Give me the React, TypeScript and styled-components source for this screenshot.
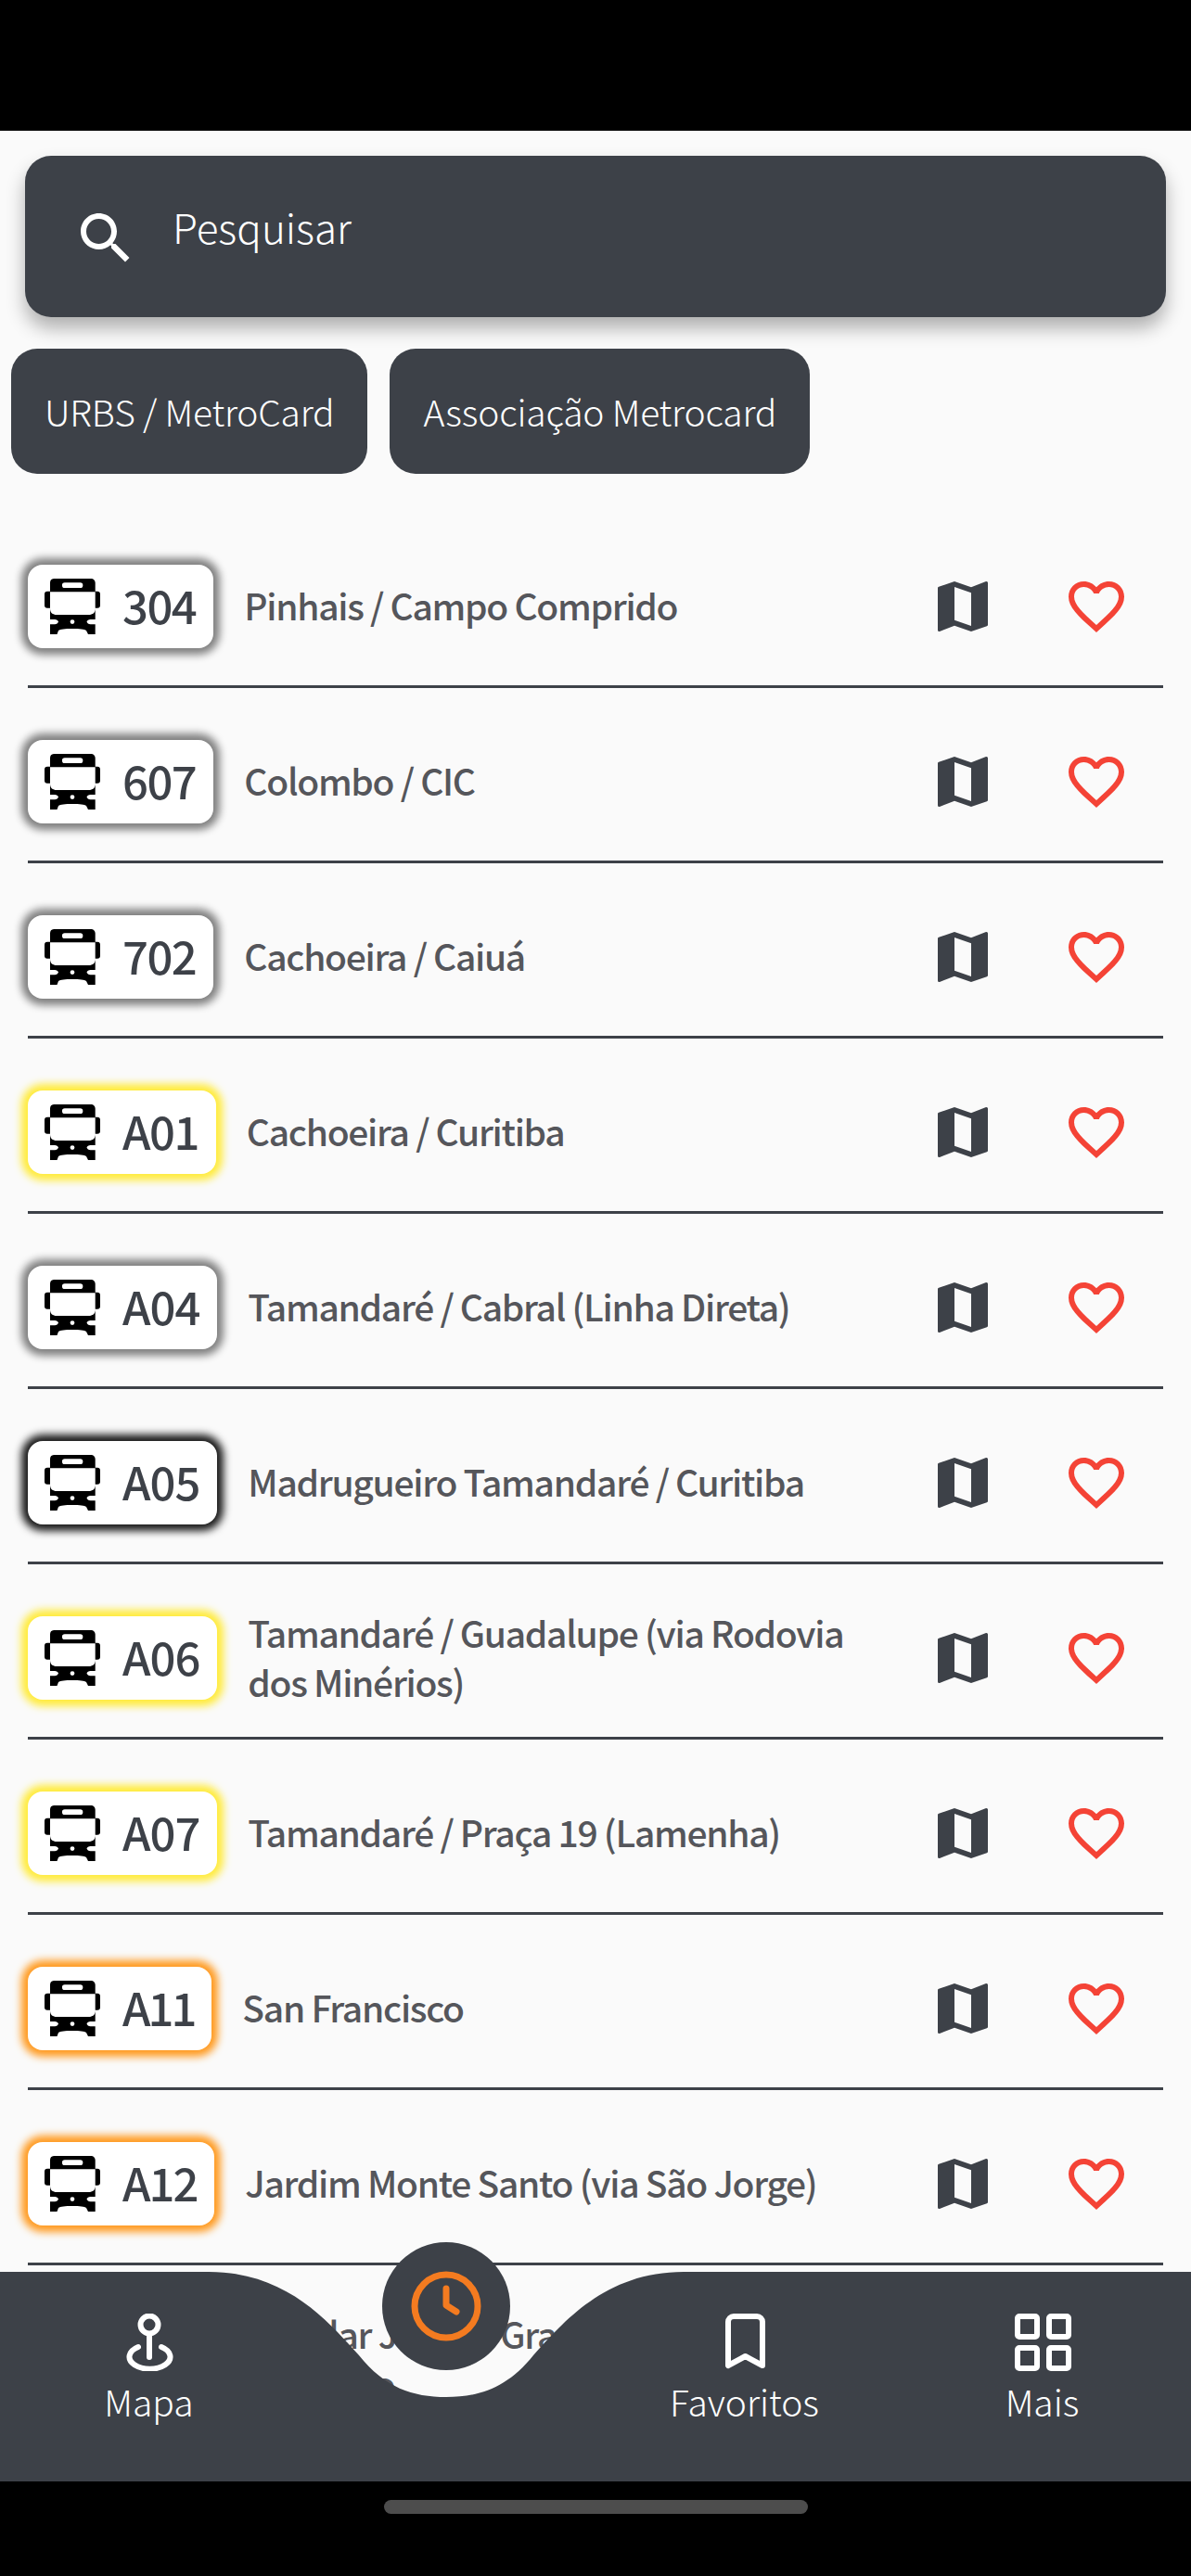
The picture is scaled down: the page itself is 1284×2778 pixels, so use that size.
import React from 'react';
import styled, { createGlobalStyle } from 'styled-components';

const Global = createGlobalStyle`
  html, body { margin: 0; padding: 0; background: #000; }
  * { box-sizing: border-box; }
`;

const DARK = '#3d4148';
const FONT = `"Noto Sans CJK JP", "Noto Sans", sans-serif`;

const Screen = styled.div`
  width: 1284px;
  height: 2778px;
  display: flex;
  flex-direction: column;
  overflow: hidden;
  font-family: ${FONT};
  background: #000;
`;
const StatusBar = styled.div`
  height: 141px;
  flex: none;
  background: #000;
`;
const Main = styled.main`
  position: relative;
  flex: 1;
  min-height: 0;
  overflow: hidden;
  background: #fafafa;
`;
const SearchBar = styled.div`
  height: 174px;
  margin: 27px 27px 0;
  padding: 48px 0 0 51px;
  display: flex;
  align-items: flex-start;
  gap: 36px;
  border-radius: 28px;
  background: ${DARK};
  box-shadow: 0 12px 20px rgba(0, 0, 0, 0.3);
  color: #fff;
  font-size: 44px;
  font-weight: 300;
  line-height: 56px;
  svg { flex: none; margin-top: 5px; }
`;
const Chips = styled.div`
  display: flex;
  gap: 24px;
  margin: 34px 0 42px 12px;
`;
const Chip = styled.button`
  height: 135px;
  padding: 0 36px 2px;
  border: 0;
  border-radius: 28px;
  background: ${DARK};
  color: #fff;
  font-family: ${FONT};
  font-size: 39px;
  font-weight: 300;
  letter-spacing: -0.2px;
`;
const LineRow = styled.div`
  height: 189px;
  margin: 0 30px;
  padding: 16px 36px 0 0;
  display: flex;
  align-items: center;
  border-bottom: 3px solid ${DARK};
`;
const Badge = styled.div<{ $glow: string; $tracking: number }>`
  flex: none;
  height: 90px;
  display: inline-flex;
  align-items: center;
  padding: 0 19px 0 18px;
  gap: 24px;
  border-radius: 16px;
  background: #fff;
  box-shadow: 0 0 9px 7px ${(p) => p.$glow};
  color: ${DARK};
  font-size: 49px;
  font-weight: 500;
  letter-spacing: ${(p) => p.$tracking}px;
`;
const Code = styled.span`
  padding-bottom: 5px;
`;
const Title = styled.div`
  flex: 1;
  min-width: 0;
  padding: 0 40px 3px 33px;
  color: #55565b;
  font-size: 39px;
  font-weight: 500;
  line-height: 53px;
  letter-spacing: -1.3px;
`;
const Actions = styled.div`
  flex: none;
  display: flex;
  gap: 72px;
`;
const BottomNav = styled.nav`
  position: absolute;
  left: 0;
  right: 0;
  bottom: 0;
  height: 226px;
  display: grid;
  grid-template-columns: repeat(4, 1fr);
  color: #fff;
`;
const NavShape = styled.svg`
  position: absolute;
  inset: 0;
`;
const NavItem = styled.div`
  position: relative;
  display: flex;
  flex-direction: column;
  align-items: center;
  padding-top: 45px;
  font-size: 39px;
  font-weight: 300;
  line-height: 52px;
  gap: 6px;
`;
const ClockButton = styled.div`
  position: absolute;
  left: 412px;
  top: -32px;
  width: 138px;
  height: 138px;
  border-radius: 50%;
  background: ${DARK};
  display: flex;
  align-items: center;
  justify-content: center;
`;
const GestureBar = styled.div`
  height: 102px;
  flex: none;
  background: #000;
  display: flex;
  justify-content: center;
  padding-top: 20px;
  &::after {
    content: '';
    width: 457px;
    height: 15px;
    border-radius: 8px;
    background: #4d4d4d;
  }
`;

const SearchIcon = () => (
  <svg width="72" height="72" viewBox="0 0 24 24" fill="#fff">
    <path d="M15.5 14h-.79l-.28-.27C15.41 12.59 16 11.11 16 9.5 16 5.91 13.09 3 9.5 3S3 5.91 3 9.5 5.91 16 9.5 16c1.61 0 3.09-.59 4.23-1.57l.27.28v.79l5 4.99L20.49 19l-4.99-5zm-6 0C7.01 14 5 11.99 5 9.5S7.01 5 9.5 5 14 7.01 14 9.5 11.99 14 9.5 14z" />
  </svg>
);

const BusIcon = () => (
  <svg width="60" height="60" viewBox="0 0 60 60">
    <path
      fillRule="evenodd"
      d="M10 0H50A4.5 4.5 0 0 1 54.7 4.5V13.7H57A3 3 0 0 1 60 16.7V28.7A3 3 0 0 1 57 31.7H54.7V60H47L45 56C43 54.5 38 54 30 54S17 54.5 15 56L13.5 60H6V31.7H3A3 3 0 0 1 0 28.7V16.7A3 3 0 0 1 3 13.7H6V4.5A4.5 4.5 0 0 1 10 0ZM21.8 4.3A2.8 2.8 0 0 0 21.8 10H38.5A2.8 2.8 0 0 0 38.5 4.3ZM6 14.3V32C6 37 9 39 13 39H47.5C52 39 54.7 37 54.7 32V14.3ZM6 44V49.2H11C13 49.2 14.5 48.2 15 46.6C14.5 45 13 44 11 44ZM54.7 44H49.5C47.5 44 46 45 45.5 46.6C46 48.2 47.5 49.2 49.5 49.2H54.7ZM30 44.2A2.4 2.4 0 1 0 30 49A2.4 2.4 0 1 0 30 44.2Z"
      fill="#000"
    />
  </svg>
);

const MapIcon = () => (
  <svg width="72" height="72" viewBox="0 0 24 24" fill={DARK}>
    <path d="M20.5,3L20.34,3.03L15,5.1L9,3L3.36,4.9C3.15,4.97 3,5.15 3,5.38V20.5A0.5,0.5 0 0,0 3.5,21L3.66,20.97L9,18.9L15,21L20.64,19.1C20.85,19.03 21,18.85 21,18.62V3.5A0.5,0.5 0 0,0 20.5,3M15,19L9,16.89V5L15,7.11V19Z" />
  </svg>
);

const HeartIcon = () => (
  <svg width="72" height="72" viewBox="0 0 24 24" fill="#f44336">
    <path d="M16.5 3c-1.74 0-3.41.81-4.5 2.09C10.91 3.81 9.24 3 7.5 3 4.42 3 2 5.42 2 8.5c0 3.78 3.4 6.86 8.55 11.54L12 21.35l1.45-1.32C18.6 15.36 22 12.28 22 8.5 22 5.42 19.58 3 16.5 3zm-4.4 15.55l-.1.1-.1-.1C7.14 14.24 4 11.39 4 8.5 4 6.5 5.5 5 7.5 5c1.54 0 3.04.99 3.57 2.36h1.87C13.46 5.99 14.96 5 16.5 5c2 0 3.5 1.5 3.5 3.5 0 2.89-3.14 5.74-7.9 10.05z" />
  </svg>
);

const PinIcon = () => (
  <svg width="62" height="62" viewBox="0 0 62 62" fill="none" stroke="#fff" strokeWidth="6" strokeLinecap="round">
    <circle cx="31" cy="12" r="9.5" />
    <path d="M31 22V47" />
    <path d="M19 36A22 13 0 1 0 44 36" />
  </svg>
);

const BookmarkIcon = () => (
  <svg width="62" height="62" viewBox="0 0 62 62" fill="none" stroke="#fff" strokeWidth="6" strokeLinejoin="round">
    <path d="M13 56V9A6 6 0 0 1 19 3H44A6 6 0 0 1 50 9V56L31.5 46Z" />
  </svg>
);

const GridIcon = () => (
  <svg width="62" height="62" viewBox="0 0 62 62" fill="none" stroke="#fff" strokeWidth="6">
    <rect x="4" y="3" width="21" height="22" rx="2" />
    <rect x="38" y="3" width="21" height="22" rx="2" />
    <rect x="4" y="37" width="21" height="22" rx="2" />
    <rect x="38" y="37" width="21" height="22" rx="2" />
  </svg>
);

const ClockIcon = () => (
  <svg width="76" height="76" viewBox="0 0 76 76" fill="none" stroke="#f47b20" strokeWidth="7" strokeLinecap="round" strokeLinejoin="round">
    <circle cx="38" cy="38" r="34" />
    <path d="M38 19V37L49 44" />
  </svg>
);

const GREY = '#808080';
const YELLOW = '#ffeb3b';
const ORANGE = '#ff9a1f';
const BLACK = '#1a1a1a';

const LINES = [
  { code: '304', name: 'Pinhais / Campo Comprido', glow: GREY, tracking: -1.5 },
  { code: '607', name: 'Colombo / CIC', glow: GREY, tracking: -1.5 },
  { code: '702', name: 'Cachoeira / Caiuá', glow: GREY, tracking: -1.5 },
  { code: 'A01', name: 'Cachoeira / Curitiba', glow: YELLOW, tracking: -1.5 },
  { code: 'A04', name: 'Tamandaré / Cabral (Linha Direta)', glow: GREY, tracking: -1 },
  { code: 'A05', name: 'Madrugueiro Tamandaré / Curitiba', glow: BLACK, tracking: -1 },
  { code: 'A06', name: 'Tamandaré / Guadalupe (via Rodovia dos Minérios)', glow: YELLOW, tracking: -1 },
  { code: 'A07', name: 'Tamandaré / Praça 19 (Lamenha)', glow: YELLOW, tracking: -1 },
  { code: 'A11', name: 'San Francisco', glow: ORANGE, tracking: -3 },
  { code: 'A12', name: 'Jardim Monte Santo (via São Jorge)', glow: ORANGE, tracking: -2 },
  { code: 'A13', name: 'Circular Jardim Gramado / Terminal Colombo', glow: ORANGE, tracking: -2 },
];

export default function App() {
  return (
    <Screen>
      <Global />
      <StatusBar />
      <Main>
        <SearchBar>
          <SearchIcon />
          <span>Pesquisar</span>
        </SearchBar>
        <Chips>
          <Chip>URBS / MetroCard</Chip>
          <Chip>Associação Metrocard</Chip>
        </Chips>
        {LINES.map((line) => (
          <LineRow key={line.code}>
            <Badge $glow={line.glow} $tracking={line.tracking}>
              <BusIcon />
              <Code>{line.code}</Code>
            </Badge>
            <Title>{line.name}</Title>
            <Actions>
              <MapIcon />
              <HeartIcon />
            </Actions>
          </LineRow>
        ))}
        <BottomNav>
          <NavShape width="1284" height="226" viewBox="0 0 1284 226">
            <path
              d="M0 0H225C310 0 355 55 387 90C415 125 445 135 481 135C517 135 547 125 575 90C607 55 652 0 737 0H1284V226H0Z"
              fill={DARK}
            />
          </NavShape>
          <NavItem>
            <PinIcon />
            Mapa
          </NavItem>
          <NavItem />
          <NavItem>
            <BookmarkIcon />
            Favoritos
          </NavItem>
          <NavItem>
            <GridIcon />
            Mais
          </NavItem>
          <ClockButton>
            <ClockIcon />
          </ClockButton>
        </BottomNav>
      </Main>
      <GestureBar />
    </Screen>
  );
}
